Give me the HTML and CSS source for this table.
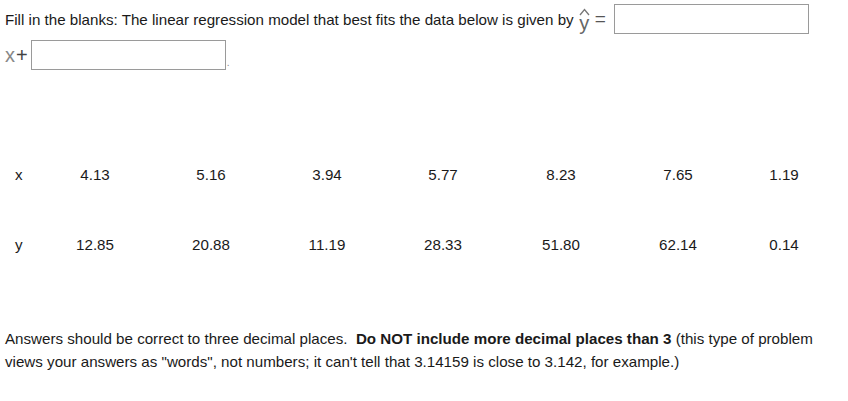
FILE: index.html
```html
<!DOCTYPE html>
<html>
<head>
<meta charset="utf-8">
<link rel="stylesheet" href="styles.css">
</head>
<body>
<div class="problem">
  <div class="line first">
    <span>Fill in the blanks: The linear regression model that best fits the data below is given by</span>
    <span class="math"><span class="yhat"><svg class="hat" width="11" height="8" viewBox="0 0 11 8"><path d="M1 7 L5.5 1.5 L10 7" fill="none" stroke="#777" stroke-width="1.3"/></svg><i>y</i></span><span class="eq">=</span></span>
    <span class="box box-a"></span>
  </div>
  <div class="line second">
    <span class="math"><i class="xv">x</i><span class="plus">+</span></span><span class="box box-b"></span><span class="dot">.</span>
  </div>
  <table class="data">
    <tr><td class="lab">x</td><td class="c1">4.13</td><td class="c2">5.16</td><td class="c3">3.94</td><td class="c4">5.77</td><td class="c5">8.23</td><td class="c6">7.65</td><td class="c7">1.19</td></tr>
    <tr><td class="lab">y</td><td>12.85</td><td>20.88</td><td>11.19</td><td>28.33</td><td>51.80</td><td>62.14</td><td>0.14</td></tr>
  </table>
  <p class="note">Answers should be correct to three decimal places.&nbsp; <b>Do NOT include more decimal places than 3</b> (this type of problem views your answers as "words", not numbers; it can't tell that 3.14159 is close to 3.142, for example.)</p>
</div>
</body>
</html>
```
FILE: styles.css
```css
body {
  margin: 0;
  background: #fff;
  font-family: Arial, "Liberation Sans", sans-serif;
  font-size: 15.15px;
  color: #1a1a1a;
}
.problem {
  padding: 4px 5px 0 5px;
}
.line {
  display: flex;
  align-items: center;
}
.first {
  height: 30px;
}
.second {
  margin-top: 6px;
  height: 30px;
}
.math {
  display: inline-flex;
  align-items: center;
  color: #555;
  font-family: "Liberation Sans", Arial, sans-serif;
}
.yhat {
  position: relative;
  display: inline-flex;
  flex-direction: column;
  align-items: center;
  margin-left: 5px;
  font-size: 20px;
  line-height: 18px;
  margin-top: 2px;
}
.yhat i {
  font-style: normal;
  color: #666;
}
.hat {
  display: block;
  margin-bottom: -2px;
}
.eq {
  font-size: 19px;
  margin-left: 5px;
  color: #555;
}
.box {
  display: inline-block;
  height: 28px;
  border: 1px solid #9a9a9a;
  background: #fff;
}
.box-a {
  width: 193px;
  margin-left: 8px;
}
.box-b {
  width: 193px;
  margin-left: 3px;
}
.xv {
  font-size: 20px;
  font-style: normal;
  color: #888;
}
.plus {
  font-size: 20px;
  margin-left: 1px;
  color: #444;
}
.dot {
  align-self: flex-end;
  margin-left: 1px;
  color: #888;
  font-size: 10px;
  line-height: 14px;
}
.data {
  border-collapse: collapse;
  margin-top: 69px;
}
.data td {
  text-align: center;
  height: 70px;
  padding: 0;
}
.data td.lab {
  width: 22px;
  text-align: left;
  padding-left: 10px;
}
.data td.c1, .data td.c2, .data td.c3, .data td.c4 { width: 116px; }
.data td.c5 { width: 120px; }
.data td.c6 { width: 114px; }
.data td.c7 { width: 98px; }
.note {
  margin: 48px 0 0 0;
  line-height: 23px;
  width: 815px;
}
```
